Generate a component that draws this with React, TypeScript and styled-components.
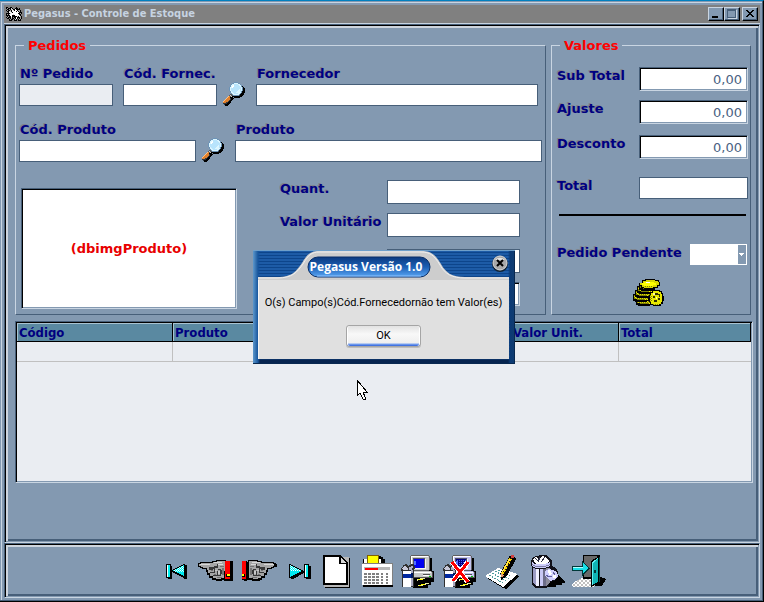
import React from "react";
import styled, { createGlobalStyle, css } from "styled-components";

const c = {
  base: "#8399b1",
  light: "#c9d5e2",
  dark: "#475f79",
  navy: "#000080",
  pale: "#eaedf2",
};

const wide = '"DejaVu Sans", Verdana, sans-serif';
const narrow = '"DejaVu Sans Condensed", "DejaVu Sans", Tahoma, sans-serif';

const GlobalStyle = createGlobalStyle`
  *, *::before, *::after { box-sizing: border-box; }
  body { margin: 0; background: ${c.base}; }
  button, input, select { font: inherit; margin: 0; padding: 0; border-radius: 0; }
`;

const sunken = css`
  border: 1px solid;
  border-color: ${c.dark} ${c.light} ${c.light} ${c.dark};
  box-shadow: inset 1px 1px #000, inset -1px -1px ${c.base};
`;

const Window = styled.div`
  position: relative;
  display: flex;
  flex-direction: column;
  min-height: 100vh;
  padding: 4px 3px 3px 4px;
  background: ${c.base};
  border-style: solid;
  border-width: 1px 1px 1px 0;
  border-color: #0080c0 #000 #000;
  box-shadow: inset -1px -1px ${c.dark}, inset 0 1px ${c.base}, inset 1px 0 ${c.base},
    inset 2px 2px ${c.light};
  font-family: ${wide};
  font-size: 13px;
`;

const TitleBar = styled.header`
  display: flex;
  align-items: center;
  height: 19px;
  padding: 0 2px;
  background: #808080;
  border-bottom: 1px solid ${c.light};
`;

const TitleText = styled.h1`
  flex: 1;
  margin: 0 0 0 2px;
  color: #c6d3e1;
  font: bold 11px/16px ${narrow};
`;

const CaptionButton = styled.button<{ $apart?: boolean }>`
  display: block;
  width: 16px;
  height: 14px;
  margin-left: ${(p) => (p.$apart ? 2 : 0)}px;
  background: ${c.base};
  border: 1px solid;
  border-color: ${c.light} #000 #000 ${c.light};
  box-shadow: inset -1px -1px ${c.dark};
  svg { display: block; }
`;

const panel = css`
  border: 1px solid;
  border-color: ${c.dark} ${c.light} ${c.light} ${c.dark};
  box-shadow: inset 1px 1px #000, inset -1px -1px ${c.base}, inset 3px 3px #ced5de,
    inset -3px -3px ${c.dark};
`;

const FormPanel = styled.main`
  ${panel}
  flex: 1;
  padding: 12px 6px 10px 10px;
`;

const Groups = styled.div`
  display: grid;
  grid-template-columns: 1fr 200px;
  gap: 5px;
  margin-right: 2px;
`;

const Group = styled.fieldset`
  min-width: 0;
  margin: 0;
  padding: 0 2px 5px 3px;
  border: 1px solid;
  border-color: ${c.light} ${c.dark} ${c.dark} ${c.light};
`;

const Legend = styled.legend`
  margin-left: 5px;
  padding: 0 4px;
  color: #f00;
  font-weight: bold;
  line-height: 17px;
`;

const Label = styled.label`
  padding-left: 1px;
  color: ${c.navy};
  font-weight: bold;
  line-height: 17px;
  text-shadow: -1px -1px 0 #80838a;
  white-space: nowrap;
`;

const TextInput = styled.input<{ $sunken?: boolean; $tall?: boolean }>`
  display: block;
  width: 100%;
  min-width: 0;
  height: ${(p) => (p.$tall ? 24 : 22)}px;
  padding: 0 5px;
  background: #fff;
  border: 1px solid ${c.dark};
  color: #4a6282;
  text-align: ${(p) => (p.$sunken ? "right" : "left")};
  outline: none;
  ${(p) => p.$sunken && sunken}
  &:read-only { background: ${c.pale}; }
`;

const FieldRow = styled.div<{ $top: number; $end: number }>`
  display: flex;
  align-items: flex-end;
  gap: 10px;
  padding-top: ${(p) => p.$top}px;
  padding-right: ${(p) => p.$end}px;
`;

const Field = styled.div<{ $width?: number }>`
  display: flex;
  flex-direction: column;
  gap: 2px;
  flex: ${(p) => (p.$width ? `0 0 ${p.$width}px` : "1 1 0")};
`;

const IconButton = styled.button`
  display: block;
  background: none;
  border: 0;
  svg { display: block; overflow: visible; }
`;

const SearchButton = styled(IconButton)`
  margin-left: -5px;
`;

const ProductArea = styled.div`
  display: flex;
  align-items: flex-start;
  margin-top: 18px;
`;

const ProductImage = styled.div`
  ${sunken}
  display: flex;
  align-items: center;
  justify-content: center;
  flex: 0 0 216px;
  height: 121px;
  margin: 8px 42px 0 2px;
  background: #fff;
  color: #e80000;
  font-weight: bold;
`;

const AmountRow = styled.div<{ $gap: number; $indent?: number }>`
  display: flex;
  justify-content: space-between;
  align-items: flex-start;
  margin-top: ${(p) => p.$gap}px;
  padding-left: ${(p) => p.$indent ?? 0}px;
`;

const Amounts = styled.div`
  flex: 0 0 241px;
`;

const Slot = styled.div<{ $width: number }>`
  position: relative;
  flex: 0 0 ${(p) => p.$width}px;
  margin-left: auto;
`;

const Divider = styled.hr`
  height: 2px;
  margin: 15px 2px 0 4px;
  background: #000;
  border: 0;
`;

const Select = styled.select`
  display: block;
  width: 57px;
  height: 21px;
  appearance: none;
  background: #fff;
  border: 1px solid #fff;
`;

const Arrow = styled.svg`
  position: absolute;
  top: 1px;
  right: 1px;
  pointer-events: none;
`;

const CoinSpot = styled.div`
  display: flex;
  justify-content: center;
  padding: 14px 6px 0 0;
`;

const GridBox = styled.div`
  ${sunken}
  min-height: 162px;
  margin-top: 6px;
  padding: 1px;
  background: ${c.pale};
`;

const Table = styled.table`
  width: 100%;
  border-collapse: separate;
  border-spacing: 0;
  table-layout: fixed;
  th {
    height: 19px;
    padding: 0 2px;
    background: #5a89a1;
    border: solid #000;
    border-width: 0 1px 1px 0;
    box-shadow: inset 1px 1px #a9c3d1;
    color: ${c.navy};
    font: bold 13px/17px ${narrow};
    text-align: left;
  }
  td {
    height: 20px;
    padding: 0;
    border: solid #c0c0c0;
    border-width: 0 1px 1px 0;
  }
  td:last-child { border-right: 0; }
`;

const ToolBar = styled.nav`
  ${panel}
  display: flex;
  justify-content: center;
  gap: 8px;
  padding: 10px 0 9px 9px;
`;

const Overlay = styled.div`
  position: absolute;
  inset: 0;
  display: flex;
  align-items: center;
  justify-content: center;
  padding: 11px 0 0 4px;
`;

const Dialog = styled.section`
  width: 262px;
  padding: 0 6px 5px 5px;
  background:
    linear-gradient(90deg, #5d98cc 0, #17559c 5px, transparent 7px, transparent 255px, #0b3a75 257px, #103c70 100%),
    linear-gradient(transparent 108px, #06244f 110px),
    repeating-linear-gradient(#1d5ba6 0 2px, #0d458b 2px 3px);
  box-shadow: inset 0 1px #6f9fc9, inset -1px -1px #082850;
`;

const DialogHead = styled.header`
  position: relative;
  display: flex;
  align-items: flex-start;
  height: 28px;
`;

const TabShape = styled.svg`
  position: absolute;
  left: -5px;
  top: 0;
`;

const DialogTitle = styled.h2`
  position: relative;
  flex: 1;
  margin: 8px 0 0 52px;
  color: #fff;
  font: bold 12px/17px "Open Sans", Tahoma, sans-serif;
  white-space: nowrap;
`;

const CloseButton = styled(IconButton)`
  position: relative;
  margin-top: 5px;
`;

const DialogBody = styled.div`
  display: flex;
  flex-direction: column;
  align-items: center;
  padding: 18px 0 12px;
  background: #e0e0e0;
  border-left: 1px solid #f4f4f4;
  color: #000;
  font: 11px/14px Roboto, "Liberation Sans", sans-serif;
`;

const Message = styled.p`
  margin: 0;
  white-space: nowrap;
`;

const OkButton = styled.button`
  width: 75px;
  height: 22px;
  margin-top: 15px;
  background: linear-gradient(#e2e2e2, #f8f8f8 40%, #efefef 17px, #7ea6f0 18px, #2e62dc 20px);
  border: 1px solid #a5a5a5;
  border-radius: 3px;
  box-shadow: inset 1px 0 #fff, inset -1px 0 #fff, 0 1px #bdbdbd;
  color: #000;
`;

const Pointer = styled.svg`
  position: absolute;
  left: 356px;
  top: 378px;
  pointer-events: none;
`;

const palette: Record<string, string> = {
  k: "#000", w: "#fff", g: "#a4a4a4", d: "#5c5c5c", l: "#d0d0d0", r: "#f00000", y: "#ffff00",
  o: "#e0802c", p: "#ffc080", b: "#b8e4fc", c: "#dcf6ff", s: "#6c94b8", n: "#303840",
};

function Pixels({ rows, width, height }: { rows: string[]; width: number; height: number }) {
  return (
    <svg width={width} height={height} shapeRendering="crispEdges" aria-hidden="true">
      {rows.flatMap((row, y) =>
        [...row].map((ch, x) =>
          palette[ch] ? <rect key={`${x}-${y}`} x={x} y={y} width="1" height="1" fill={palette[ch]} /> : null
        )
      )}
    </svg>
  );
}

const horse = [
  "kk..kk....k.....",
  "kgkkklk..kkk.k..",
  ".kkgkllkkwkkkk..",
  "kgkkgkwlkwwkggk.",
  ".kkllkwwwwkwkgk.",
  "..kwwlkwwwwwwkkk",
  "kkkklwwwwwwwkkgk",
  "kgklwwwlwwwwwkk.",
  "kkkkwwkkkwwwwlk.",
  ".kgkkwkkkkklkwgk",
  "kgkkklk.kkwkkkgk",
  ".kk.kgkk.kwk.kgk",
  "...kgkk.klk.kgk.",
  "...kkk..kkk.kkk.",
];

const lens = [
  "............ssss........",
  "..........ssccccss......",
  ".........sccbbbbccs.....",
  "........sccwbbbbbccs....",
  "........scwwbbbbbbcsk...",
  ".......sccwbbbbbbbbcsk..",
  ".......scbbbbbbbbbbcskk.",
  ".......scbbbbbbbbcbcskk.",
  ".......scbbbbbbbccbcskk.",
  "........scbbbbbcccbskkk.",
  "........sccbbbcccccskkk.",
  ".........sccbbbbccskkk..",
  "........ddsccccccskkkk..",
  ".......dlddssssssnkkk...",
  "......podlkkkkkkkkkk....",
  ".....pookkk.kkkkkk......",
  "....pooonkkk............",
  "...poooonkk.............",
  "..poooonkk..............",
  ".poooonkk...............",
  ".ooonnkkk...............",
  ".nnnnkkk................",
  "..nkkkk.................",
  "...kkk..................",
];

const Magnifier = () => <Pixels rows={lens} width={24} height={24} />;

const PatternSheet = styled.svg`
  position: absolute;
`;

const Patterns = () => (
  <PatternSheet width="0" height="0" aria-hidden="true">
    <defs>
      <pattern id="cyanDither" width="2" height="2" patternUnits="userSpaceOnUse">
        <rect width="2" height="2" fill="#00f0f0" />
        <rect width="1" height="1" fill="#fff" />
        <rect x="1" y="1" width="1" height="1" fill="#b0ffff" />
      </pattern>
      <pattern id="goldDither" width="2" height="2" patternUnits="userSpaceOnUse">
        <rect width="2" height="2" fill="#808000" />
        <rect width="1" height="1" fill="#ff0" />
        <rect x="1" y="1" width="1" height="1" fill="#e0e000" />
      </pattern>
      <pattern id="blueDither" width="2" height="2" patternUnits="userSpaceOnUse">
        <rect width="2" height="2" fill="#000080" />
        <rect width="1" height="1" fill="#4060ff" />
      </pattern>
      <pattern id="floorDither" width="4" height="4" patternUnits="userSpaceOnUse">
        <rect width="4" height="4" fill="#fff" />
        <rect width="2" height="2" fill="#c0c0c0" />
        <rect x="2" y="2" width="2" height="2" fill="#c0c0c0" />
      </pattern>
    </defs>
  </PatternSheet>
);

const Icon = ({ w, children }: { w: number; children: React.ReactNode }) => (
  <svg width={w} height="34" viewBox={`0 0 ${w} 34`} shapeRendering="crispEdges" aria-hidden="true">
    {children}
  </svg>
);

const FirstIcon = () => (
  <Icon w={24}>
    <path d="M2 12h4v13H2zM8 18l11-7h2v14h-2z" fill="#000" />
    <path d="M0 10h5v14H0zM6 16h1v-1h2v-1h2v-1h2v-1h2v-1h2v-1h2v14h-2v-1h-2v-1h-2v-1h-2v-1H9v-1H7v-1H6z" fill="#000" />
    <path d="M1 11h3v12H1z" fill="#00f0f0" />
    <path d="M1 11h1v12H1z" fill="#fff" />
    <path d="M7 16h2v-1h2v-1h2v-1h2v-1h2v-1h1v11h-1v-1h-2v-1h-2v-1h-2v-1H9v-1H7z" fill="#00e8f0" />
    <path d="M8 16h1v-1h2v-1h2v-1h2v-1h3v6h-9z" fill="url(#cyanDither)" />
  </Icon>
);

const LastIcon = () => (
  <Icon w={26}>
    <path d="M4 25V14l15 4-13 7zM19 12h5v13h-5z" fill="#000" />
    <path d="M2 10h2v1h2v1h2v1h2v1h2v1h2v1h2v2h-2v1h-2v1h-2v1H8v1H6v1H4v1H2zM17 10h5v14h-5z" fill="#000" />
    <path d="M3 11h1v1h2v1h2v1h2v1h2v1h2v2h-2v1h-2v1H8v1H6v1H4v1H3z" fill="#00e8f0" />
    <path d="M3 11h1v1h2v1h2v1h2v1h2v1h2v1H3z" fill="url(#cyanDither)" />
    <path d="M18 11h3v12h-3z" fill="#00f0f0" />
    <path d="M18 11h1v12h-1z" fill="#fff" />
  </Icon>
);

const HandArt = () => (
  <>
    <path d="M0 9h2V8h12V7h4V6h10v2h2v18h-6v1h-6v-1h-4v-2h-3v-3h-2v-3H8v-3H4v-1H2v-1H0z" fill="#000" />
    <path d="M1 10h2V9h12V8h4V7h8v17h-4v1h-5v-1h-3v-2h-3v-3h-2v-3h-1v-2H5v-1H3v-1H1z" fill="#a6a6a6" />
    <path d="M2 10h10v1H2zM16 8h8v1h-8zM11 14h4v1h-4zM20 10h5v1h-5z" fill="#d8d8d8" />
    <path d="M11 13h5v-1h3v-2h1v4h-3v1h-2v1h-4zM12 18h4v1h-4zM16 15h1v4h-1zM15 21h4v1h-4zM19 17h1v5h-1zM20 15h3v1h1v4h-1v2h-3v-1h2v-5h-2z" fill="#383838" />
    <path d="M13 16h2v1h-2zM16 20h2v1h-2zM19 23h5v1h-5zM22 12h4v1h-4zM24 14h2v7h-2z" fill="#747474" />
    <path d="M17 16h2v1h-2zM20 17h2v3h-2z" fill="#c8c8c8" />
  </>
);

const HandLeftIcon = () => (
  <Icon w={36}>
    <HandArt />
    <path d="M27 7h8v20h-9z" fill="#000" />
    <path d="M27 7h5v18h-5z" fill="#f00" />
    <path d="M28 20h4v3h-4z" fill="#000" />
    <path d="M29 20h3v2h-3z" fill="#ff0" />
  </Icon>
);

const HandRightIcon = () => (
  <Icon w={37}>
    <g transform="translate(34 0) scale(-1 1)"><HandArt /></g>
    <path d="M32 10h3v3h-3zM10 26h8v1h-8z" fill="#000" />
    <path d="M0 7h5v20H2v-1H0z" fill="#000" />
    <path d="M0 7h4v18H0z" fill="#f00" />
    <path d="M0 20h3v3H0z" fill="#000" />
    <path d="M0 20h2v2H0z" fill="#ff0" />
  </Icon>
);

const NewIcon = () => (
  <Icon w={30}>
    <path d="M4 4h25v30H4z" fill="#000" />
    <path d="M3 3h25v30H3z" fill="#b8b8b8" />
    <path d="M2 1h18v1h1v1h1v1h1v1h1v1h1v1h1v1h1v23H2z" fill="#000" />
    <path d="M4 3h14v7h7v19H4z" fill="#fff" />
    <path d="M20 4l5 5h-5z" fill="#d8d8d8" />
  </Icon>
);

const CalendarIcon = () => (
  <Icon w={34}>
    <path d="M4 12h30v21H4z" fill="#000" />
    <path d="M4 5h4V3h14l2 3v4H4zM20 2h2v1h2v2h2v4h-6z" fill="#000" />
    <path d="M5 5h17v5H5z" fill="#fff" />
    <path d="M8 1h12v9H8z" fill="#806000" />
    <path d="M9 2h10v8H9z" fill="#ff0" />
    <path d="M3 9h31v22H3z" fill="#808080" />
    <path d="M3 10h30v21H3z" fill="#fff" />
    <path d="M5 13h26v3H5z" fill="#b8b8b8" />
    <path d="M6 14h13v2H6z" fill="#f00" />
    {[19, 22, 25, 28].map((y) =>
      [5, 9, 13, 17, 22, 27].map((x) => (
        <rect key={`${x}-${y}`} x={x} y={y} width={x > 20 ? 2 : 3} height="2" fill="#808080" />
      ))
    )}
  </Icon>
);

const ComputerArt = ({ shell, screen }: { shell: string; screen: string }) => (
  <>
    <path d="M14 4h17v13h2v11h-3v3h-3v3H12V22z" fill="#000" />
    <path d="M9 2h1V1h18v1h1v14h-1v1H9z" fill="#606060" />
    <path d="M10 2h18v14H10z" fill={shell} />
    <path d="M10 2h17v1H11v12h-1z" fill="#fff" />
    <path d="M12 4h12v11H12z" fill="#505068" />
    <path d="M13 5h10v9H13z" fill={screen} />
    <path d="M13 7h2v4h-2z" fill="#5070ff" />
    <path d="M24 5h1v10H13v-1h11z" fill="#f4f4f4" />
    <path d="M10 17h21l1 2v5H10z" fill="#505050" />
    <path d="M11 17h19v1h1v5H11z" fill={shell} />
    <path d="M11 18h19v1H11zM22 21h6v1h-6z" fill="#fff" />
    <path d="M22 20h7v1h-7z" fill="#505050" />
    <path d="M28 22h2v1h-2z" fill="#0c0" />
    <path d="M14 24h12v4H14z" fill="#000" />
    <path d="M16 25h3v-1h5v1h-2v1h-5v1h-1zM17 31h3v-1h4v-1h4v1h-3v1h-3v1h-5z" fill="#e8e8a0" />
    <path d="M17 25h5v1h-5zM20 30h4v1h-4zM18 31h2v1h-2z" fill="#ff0" />
    <path d="M27 24h6v4h-5z" fill="#000" />
    <path d="M0 14h1v-1h1v-2h2v-1h2v1h1v1h1v-1h2v-1h3v2h1v3h-1v18H1V17H0z" fill="#303030" />
    <path d="M1 14h1v-1h1v-1h2v1h1v1h1v2H2v-1H1z" fill="#c8c8d8" />
    <path d="M8 13h2v-1h2v2h-1v2H8z" fill="#b0b0c8" />
    <path d="M2 17h8v16H2z" fill="#fff" />
    <path d="M10 16h2v16h-2z" fill="#a8a8c0" />
    <path d="M2 20h8v4H2z" fill="#0028a0" />
    <path d="M10 19h2v5h-2z" fill="#001860" />
  </>
);

const ProgramIcon = () => (
  <Icon w={34}>
    <ComputerArt shell="#c8c8c8" screen="#0000f0" />
  </Icon>
);

const CancelIcon = () => (
  <Icon w={34}>
    <ComputerArt shell="#c4c4f0" screen="url(#blueDither)" />
    <path d="M9 8l16 20M25 8L10 27" stroke="#fff" strokeWidth="5" fill="none" />
    <path d="M9 8l16 20M25 8L10 27" stroke="#f00" strokeWidth="3" fill="none" />
  </Icon>
);

const WriteIcon = () => (
  <Icon w={36}>
    <path d="M2 24l14-6 19 4-14 13-3-1z" fill="#000" />
    <path d="M0 22l13-8 20 6-15 13z" fill="#fff" />
    <path d="M4 21l14 8M7 19l14 8M10 17l14 8M13 16l14 7" stroke="#4c9c9c" strokeWidth="1" strokeDasharray="2 1" fill="none" />
    <path d="M29 3l2 2-9 17-6 4z" fill="#000" />
    <path d="M27 3L17 21" stroke="#000" strokeWidth="5" />
    <path d="M26 4l-9 16" stroke="#ffd800" strokeWidth="3" />
    <path d="M26 4l-9 16" stroke="#301800" strokeWidth="3" strokeDasharray="1 2" />
    <path d="M25 5l-9 15" stroke="#ffe860" strokeWidth="1" />
    <path d="M26 1h3v3h-3z" fill="#d04040" />
    <path d="M16 19l3 2-3 3z" fill="#e8a070" />
    <path d="M16 23h2v2h-2z" fill="#000" />
  </Icon>
);

const TrashIcon = () => (
  <Icon w={34}>
    <path d="M18 20l10-2 3 5 5 4v2h-3v2h-6v2H16z" fill="#000" />
    <path d="M2 7l2-4 4-1 3-1h6l4 3 2 3v5l4 2 2 4v5l-4 4-4 1-2 5-3 1H7l-4-3V16z" fill="#101018" />
    <path d="M4 5l3-2 3 3 3-4 4 1 3 4-3 3H7z" fill="#fff" />
    <path d="M6 4l4 4M12 8l4-5M11 3l-2 5" stroke="#303048" fill="none" />
    <path d="M3 8l3 2h9l6-2v4l-5 2H7l-4-2z" fill="#ccccfa" />
    <path d="M3 10l4 2h9l5-2v1l-5 2H7l-4-2z" fill="#7c7ca8" />
    <path d="M4 14l3 1v17l-3-3z" fill="#9c9cc4" />
    <path d="M7 15h3v17H7z" fill="#f0f0ff" />
    <path d="M11 15h3v17h-3z" fill="#c8c8f4" />
    <path d="M14 15h3v17h-3z" fill="#6c6c88" />
    <path d="M17 14h4v15l-4 3z" fill="#8c8c9c" />
    <path d="M16 17l4-2 4 1 4 2 1 4-2 3-5 2-3-2-3-4z" fill="#d0d0ff" />
    <path d="M19 16l3 1 1 3-3 1zM24 21h3v3h-3z" fill="#fff" />
    <path d="M17 21l3 2 3-1M24 18l2 3" stroke="#6060a0" fill="none" />
  </Icon>
);

const DoorIcon = () => (
  <Icon w={36}>
    <path d="M22 32h9l4-7-5-2-8 3z" fill="#000" />
    <path d="M0 31l5-4 8-4h16l-6 10H2z" fill="url(#floorDither)" />
    <path d="M12 1h17v24H12z" fill="#000" />
    <path d="M13 2h13v21H13z" fill="#686868" />
    <path d="M20 7l8-5v27l-8 4z" fill="#000" />
    <path d="M21 8l6-4v24l-6 3z" fill="#10b4b4" />
    <path d="M21 8l6-4v1l-5 4v21l-1 1z" fill="#60f0f0" />
    <path d="M23 16h2v3h-2z" fill="#003c3c" />
    <path d="M28 3h1v25h-1z" fill="#004848" />
    <path d="M1 12h10V7l8 7-8 8v-5H1z" fill="#003838" />
    <path d="M2 13h10V9l5 5-5 5v-3H2z" fill="#18e0e8" />
    <path d="M2 13h10v1H2z" fill="#b0ffff" />
  </Icon>
);

const Coins = () => (
  <svg width="31" height="28" viewBox="0 0 31 28" shapeRendering="crispEdges" role="img" aria-label="Moedas">
    {[[10, 23], [7, 19], [9, 15], [11, 11], [13, 8]].map(([x, y]) => (
      <g key={y}>
        <path d={`M${x - 7} ${y - 4}h3v-2h13v2h2v5h-2v2h-2v1h-12v-1h-2z`} fill="#000" />
        <path d={`M${x - 6} ${y - 3}h3v-2h11v2h2v3h-2v2h-11v-1h-3z`} fill="url(#goldDither)" />
        <path d={`M${x - 3} ${y + 1}h8v1h-8zM${x - 6} ${y - 1}h1v2h-1z`} fill="#808000" />
      </g>
    ))}
    <path d="M9 1h3V0h10v1h4v2h1v4h-2v2h-4v1H11V9H8V7H6V4h3z" fill="#000" />
    <path d="M10 2h3V1h9v1h3v1h1v3h-2v2h-4v1h-9V8H9V6H7V4h3z" fill="#d8d800" />
    <path d="M11 3h10v1h2v2h-3v1h-9V6H9V4h2z" fill="#ff0" />
    <path d="M13 3h4v1h-4z" fill="#fff" />
    <path d="M12 7h8v1h-8z" fill="url(#goldDither)" />
    <path d="M19 11h8v1h2v2h1v3h1v5h-1v3h-2v2h-8v-1h-3v-3h-1v-7h1v-3h2z" fill="#000" />
    <path d="M20 12h6v1h2v2h1v8h-1v2h-2v1h-5v-1h-3v-3h-1v-6h1v-2h2z" fill="#e8e800" />
    <path d="M17 16h2v7h-2zM20 25h5v1h-5z" fill="url(#goldDither)" />
    <path d="M22 14h3v1h2v3h-1v-2h-4zM20 17h2v2h-2zM25 19h2v2h-2zM21 21h3v2h-3z" fill="#303000" />
    <path d="M20 14h2v2h-2zM23 18h1v2h-1z" fill="#ffffa0" />
  </svg>
);

const tools: [string, () => React.ReactElement][] = [
  ["Primeiro", FirstIcon],
  ["Anterior", HandLeftIcon],
  ["Próximo", HandRightIcon],
  ["Último", LastIcon],
  ["Novo", NewIcon],
  ["Calendário", CalendarIcon],
  ["Gravar", ProgramIcon],
  ["Cancelar", CancelIcon],
  ["Editar", WriteIcon],
  ["Excluir", TrashIcon],
  ["Sair", DoorIcon],
];

type BoxProps = { id: string; label: string; width?: number; readOnly?: boolean };

const StackedField = ({ id, label, width, readOnly }: BoxProps) => (
  <Field $width={width}>
    <Label htmlFor={id}>{label}</Label>
    <TextInput id={id} readOnly={readOnly} />
  </Field>
);

export default function App() {
  return (
    <Window>
      <GlobalStyle />
      <Patterns />
      <TitleBar>
        <Pixels rows={horse} width={16} height={14} />
        <TitleText>Pegasus - Controle de Estoque</TitleText>
        <CaptionButton aria-label="Minimizar">
          <svg width="14" height="12"><path d="M3 8h6v2H3z" fill="#000" /></svg>
        </CaptionButton>
        <CaptionButton aria-label="Maximizar">
          <svg width="14" height="12" shapeRendering="crispEdges">
            <path d="M2 1h9v9H2zM3 3v6h7V3z" fill={c.dark} fillRule="evenodd" />
            <path d="M11 2h1v9H3v-1h8z" fill={c.light} />
          </svg>
        </CaptionButton>
        <CaptionButton aria-label="Fechar" $apart>
          <svg width="14" height="12" shapeRendering="crispEdges">
            <path d="M3 2h2v1h1v1h2V3h1V2h2v1h-1v1H9v1H8v1h1v1h1v1h1v1H9V8H8V7H6v1H5v1H3V8h1V7h1V6h1V5H5V4H4V3H3z" fill="#000" />
          </svg>
        </CaptionButton>
      </TitleBar>

      <FormPanel>
        <Groups>
          <Group>
            <Legend>Pedidos</Legend>
            <FieldRow $top={11} $end={5}>
              <StackedField id="pedido" label="Nº Pedido" width={94} readOnly />
              <StackedField id="codFornec" label="Cód. Fornec." width={94} />
              <SearchButton aria-label="Procurar fornecedor"><Magnifier /></SearchButton>
              <StackedField id="fornecedor" label="Fornecedor" />
            </FieldRow>
            <FieldRow $top={15} $end={1}>
              <StackedField id="codProduto" label="Cód. Produto" width={177} />
              <SearchButton aria-label="Procurar produto"><Magnifier /></SearchButton>
              <StackedField id="produto" label="Produto" />
            </FieldRow>
            <ProductArea>
              <ProductImage>(dbimgProduto)</ProductImage>
              <Amounts>
                <AmountRow $gap={0}>
                  <Label htmlFor="quant">Quant.</Label>
                  <Slot $width={133}><TextInput id="quant" $tall /></Slot>
                </AmountRow>
                <AmountRow $gap={9}>
                  <Label htmlFor="unitario">Valor Unitário</Label>
                  <Slot $width={133}><TextInput id="unitario" $tall /></Slot>
                </AmountRow>
                <AmountRow $gap={12}>
                  <Slot $width={133}><TextInput aria-label="Desconto do item" $tall /></Slot>
                </AmountRow>
                <AmountRow $gap={9}>
                  <Slot $width={133}><TextInput aria-label="Total do item" $tall $sunken /></Slot>
                </AmountRow>
              </Amounts>
            </ProductArea>
          </Group>

          <Group>
            <Legend>Valores</Legend>
            <AmountRow $gap={13} $indent={1}>
              <Label htmlFor="subtotal">Sub Total</Label>
              <Slot $width={109}><TextInput id="subtotal" $tall $sunken defaultValue="0,00" /></Slot>
            </AmountRow>
            <AmountRow $gap={9} $indent={1}>
              <Label htmlFor="ajuste">Ajuste</Label>
              <Slot $width={109}><TextInput id="ajuste" $tall $sunken defaultValue="0,00" /></Slot>
            </AmountRow>
            <AmountRow $gap={11} $indent={1}>
              <Label htmlFor="desconto">Desconto</Label>
              <Slot $width={109}><TextInput id="desconto" $tall $sunken defaultValue="0,00" /></Slot>
            </AmountRow>
            <AmountRow $gap={18} $indent={1}>
              <Label htmlFor="total">Total</Label>
              <Slot $width={109}><TextInput id="total" /></Slot>
            </AmountRow>
            <Divider />
            <AmountRow $gap={28} $indent={1}>
              <Label htmlFor="pendente">Pedido Pendente</Label>
              <Slot $width={58}>
                <Select id="pendente"><option></option><option>Sim</option><option>Não</option></Select>
                <Arrow width="9" height="19" shapeRendering="crispEdges">
                  <path d="M0 0h8v19H0z" fill={c.base} />
                  <path d="M1 8h5v1H5v1H4v1H3v-1H2V9H1z" fill="#fff" />
                </Arrow>
              </Slot>
            </AmountRow>
            <CoinSpot><Coins /></CoinSpot>
          </Group>
        </Groups>

        <GridBox>
          <Table>
            <colgroup>
              <col width="156" />
              <col />
              <col width="108" />
              <col width="132" />
            </colgroup>
            <thead>
              <tr><th>Código</th><th>Produto</th><th>Valor Unit.</th><th>Total</th></tr>
            </thead>
            <tbody>
              <tr><td /><td /><td /><td /></tr>
            </tbody>
          </Table>
        </GridBox>
      </FormPanel>

      <ToolBar aria-label="Ações">
        {tools.map(([name, Art]) => (
          <IconButton key={name} aria-label={name}><Art /></IconButton>
        ))}
      </ToolBar>

      <Overlay>
        <Dialog role="dialog" aria-labelledby="dialogTitle">
          <DialogHead>
            <TabShape width="262" height="30" viewBox="0 0 262 30" aria-hidden="true">
              <defs>
                <linearGradient id="pill" x1="0" y1="0" x2="0" y2="1">
                  <stop offset="0" stopColor="#0b3a80" />
                  <stop offset="0.5" stopColor="#1c5fb4" />
                  <stop offset="1" stopColor="#5aa6f4" />
                </linearGradient>
              </defs>
              <path d="M5 27H24C40 27 43 21 49 13C54 4 58 1 66 1H168C178 1 182 4 188 14C193 23 199 27 212 27H256V30H5Z" fill="#cdcdcd" />
              <path d="M5 28H24C40 28 44 22 50 14C55 5 59 2 66 2H168C177 2 181 5 187 15C192 24 199 28 212 28H256" fill="none" stroke="#f0f0f0" />
              <rect x="55" y="7" width="122" height="20" rx="10" fill="url(#pill)" stroke="#0a2f68" />
              <path d="M64 26H168" stroke="#8cc0fc" />
            </TabShape>
            <DialogTitle id="dialogTitle">Pegasus Versão 1.0</DialogTitle>
            <CloseButton aria-label="Fechar aviso">
              <svg width="17" height="17" viewBox="0 0 17 17">
                <circle cx="8" cy="9" r="8" fill="#123" />
                <circle cx="8" cy="8" r="7" fill="#a9a9a9" stroke="#ddd" />
                <path d="M3 5a6 5 0 0 1 10 0z" fill="#e4e4e4" />
                <path d="M5 5l6 6M11 5l-6 6" stroke="#000" strokeWidth="2" />
              </svg>
            </CloseButton>
          </DialogHead>
          <DialogBody>
            <Message>O(s) Campo(s)Cód.Fornecedornão tem Valor(es)</Message>
            <OkButton>OK</OkButton>
          </DialogBody>
        </Dialog>
      </Overlay>

      <Pointer width="13" height="21" viewBox="0 0 13 21" shapeRendering="crispEdges" aria-hidden="true">
        <path d="M1 1V17L4 14L7 20H9V18L7 13H11Z" fill="#fff" stroke="#000" />
      </Pointer>
    </Window>
  );
}
